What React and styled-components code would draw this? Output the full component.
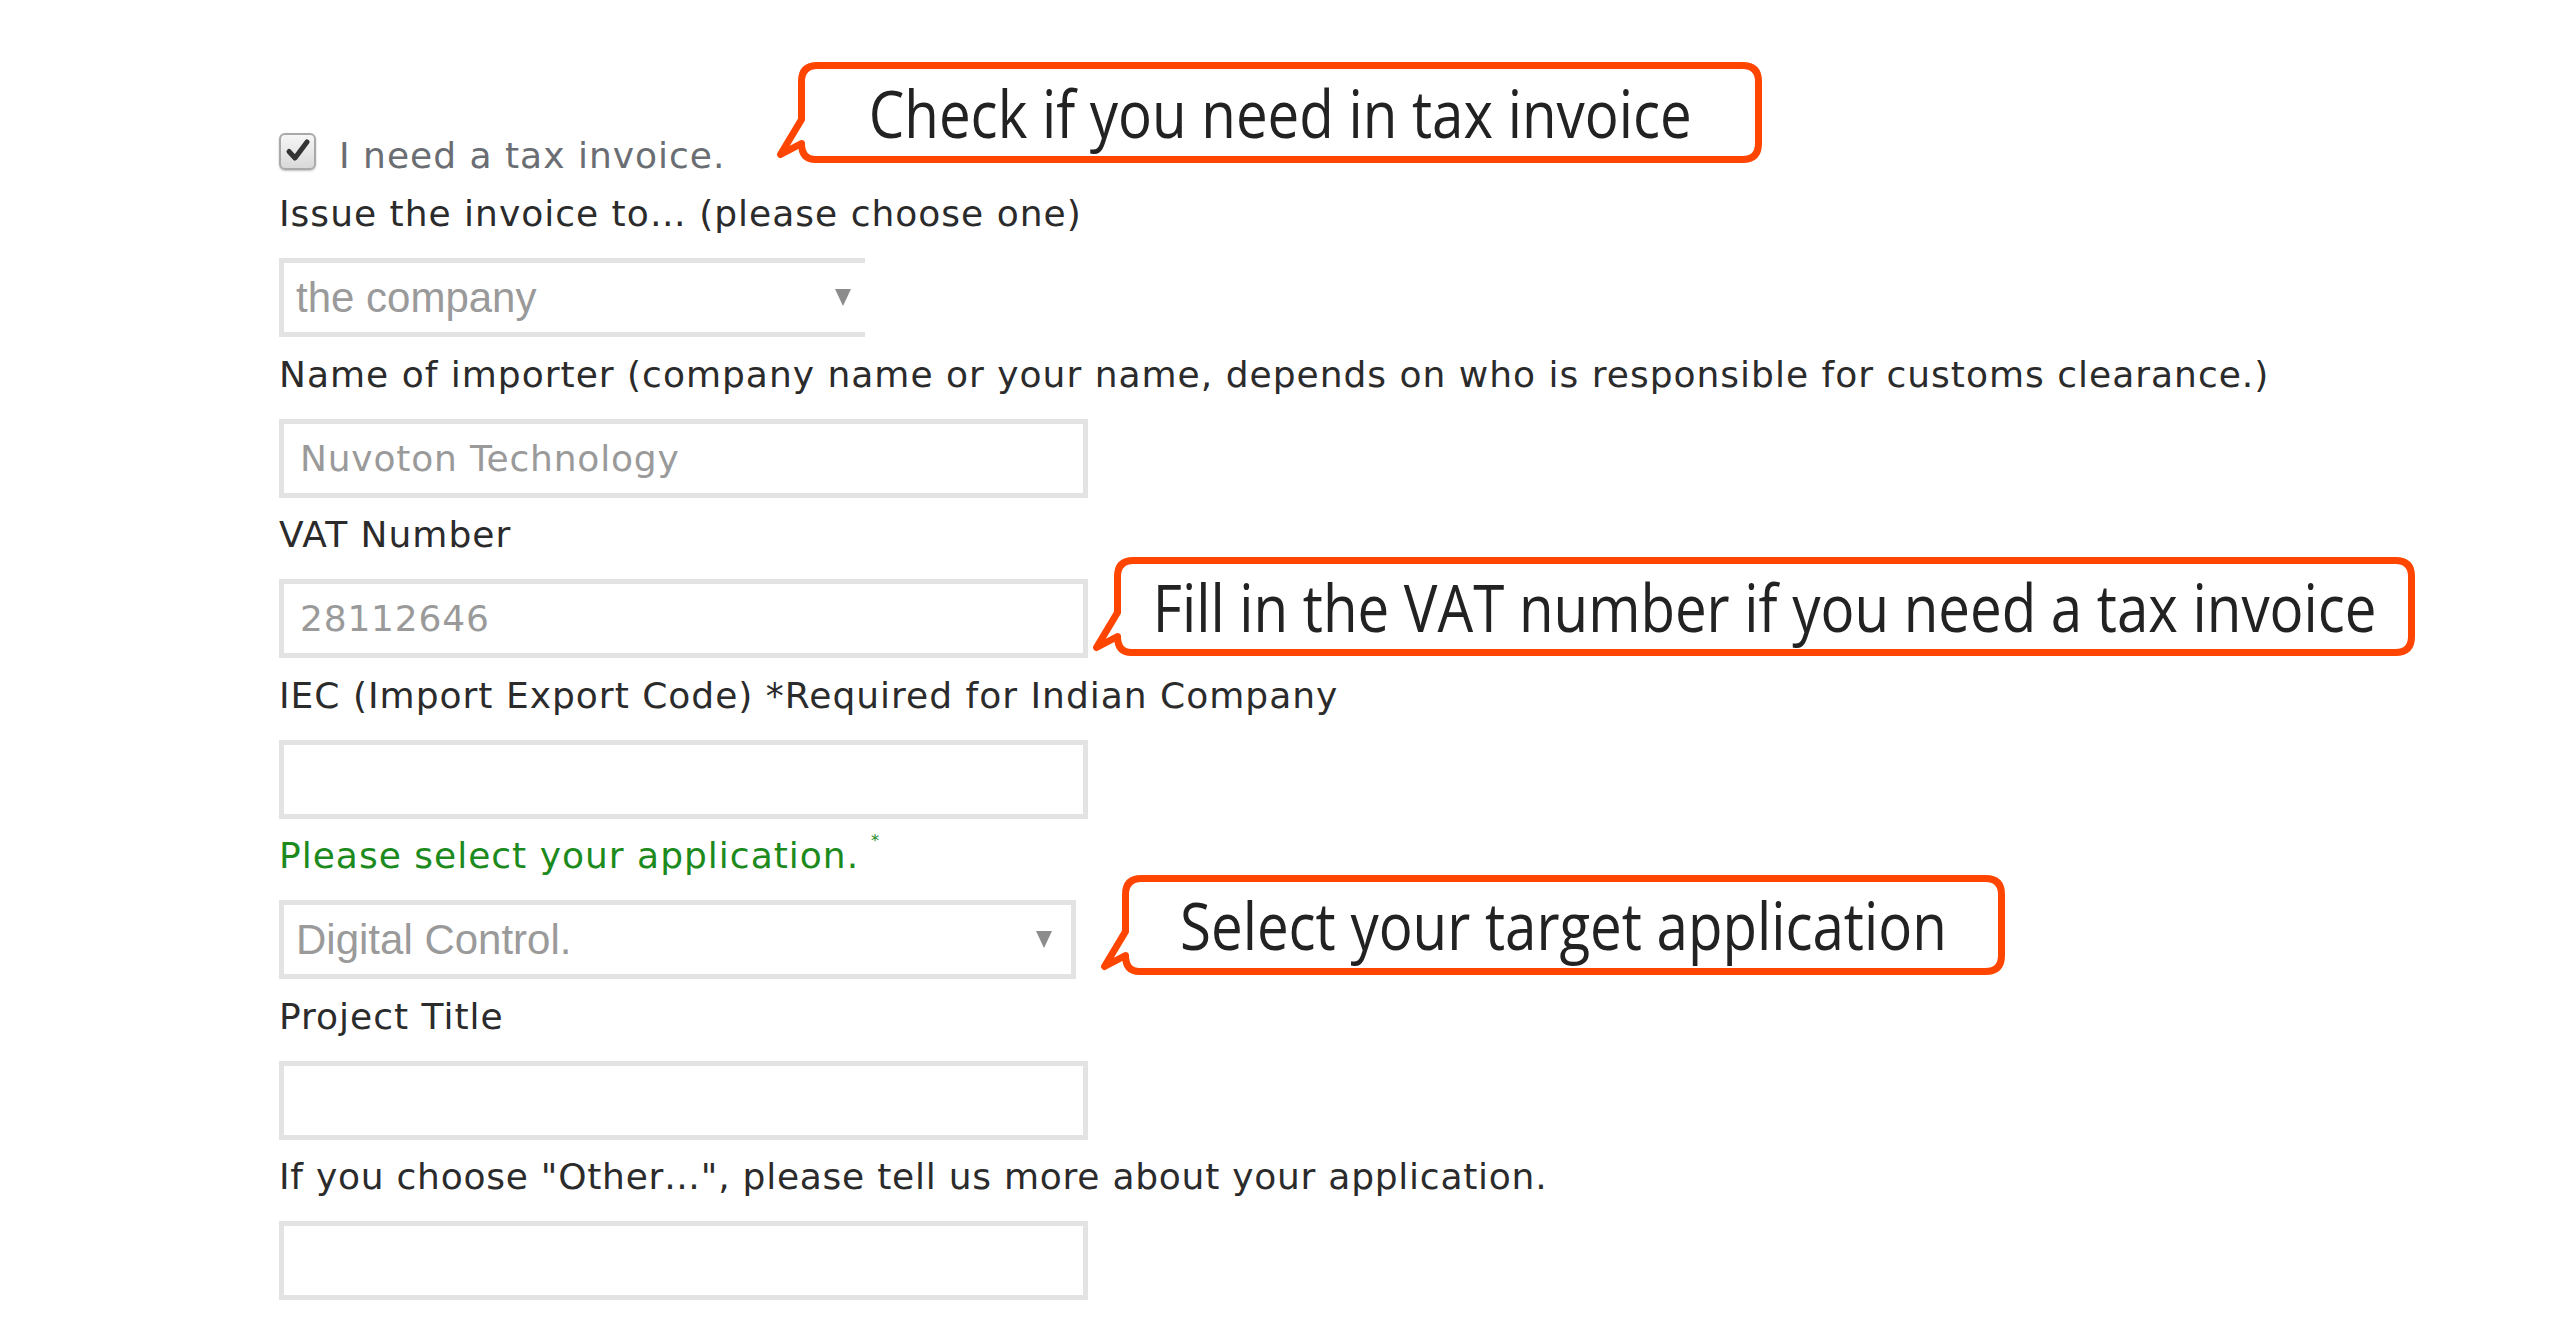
import React from "react";
import styled, { createGlobalStyle } from "styled-components";

const GlobalStyle = createGlobalStyle`
  html, body {
    margin: 0;
    padding: 0;
    background: #ffffff;
  }
  body {
    font-family: "DejaVu Sans", Verdana, sans-serif;
  }
`;

const Page = styled.div`
  position: relative;
  width: 2560px;
  height: 1332px;
  overflow: hidden;
  background: #ffffff;
`;

const Form = styled.div`
  display: flex;
  flex-direction: column;
  align-items: flex-start;
  padding: 132px 0 0 279px;
`;

const CheckRow = styled.div`
  display: flex;
  align-items: center;
  gap: 23px;
  height: 38px;
`;

const CheckBox = styled.span`
  display: inline-flex;
  align-items: center;
  justify-content: center;
  width: 37px;
  height: 37px;
  box-sizing: border-box;
  border: 2px solid #a9a9a9;
  border-radius: 6px;
  background: linear-gradient(#f6f6f6, #d9d9d9);
  box-shadow: 0 1px 2px rgba(0, 0, 0, 0.25);
`;

const CheckText = styled.span`
  font-size: 36px;
  letter-spacing: 1px;
  color: #6a6d72;
  line-height: 44px;
  position: relative;
  top: 5px;
`;

const Label = styled.label`
  display: block;
  font-size: 36px;
  letter-spacing: ${(p) => p.$spacing ?? 1}px;
  line-height: 44px;
  color: ${(p) => (p.$green ? "#1c8a1c" : "#2b2b2b")};
  margin: ${(p) => (p.$first ? "22px" : "15.5px")} 0 22px;
  white-space: nowrap;
`;

const Star = styled.sup`
  font-size: 16px;
  margin-left: 12px;
  vertical-align: 22px;
  line-height: 0;
`;

const Field = styled.div`
  display: flex;
  align-items: center;
  justify-content: space-between;
  box-sizing: border-box;
  width: ${(p) => p.$w}px;
  height: 79px;
  border: 5px solid #e3e3e3;
  border-right-width: ${(p) => (p.$open ? 0 : 5)}px;
  background: #ffffff;
  padding: 0 ${(p) => p.$pr || 16}px 0 16px;
`;

const InputValue = styled.span`
  font-size: 36px;
  letter-spacing: 0.8px;
  color: #9a9a9a;
`;

const SelectValue = styled.span`
  font-family: "Liberation Sans", Arial, sans-serif;
  font-size: 42px;
  color: #9a9a9a;
  margin-left: -4px;
`;

const Arrow = styled.span`
  width: 0;
  height: 0;
  border-left: 8px solid transparent;
  border-right: 8px solid transparent;
  border-top: 17px solid #8c8c8c;
`;

const CalloutBox = styled.div`
  position: absolute;
  left: ${(p) => p.$x - 24}px;
  top: ${(p) => p.$y}px;
  width: ${(p) => p.$w + 24}px;
  height: ${(p) => p.$h}px;
`;

const CalloutSvg = styled.svg`
  position: absolute;
  inset: 0;
  overflow: visible;
`;

const CalloutTextWrap = styled.div`
  position: absolute;
  left: 24px;
  right: 0;
  top: 0;
  bottom: 2px;
  display: flex;
  align-items: center;
  justify-content: center;
`;

const CalloutText = styled.span`
  display: inline-block;
  font-family: "Open Sans", "Noto Sans", sans-serif;
  font-size: 66px;
  color: #222222;
  white-space: nowrap;
  transform: scaleX(0.855);
  transform-origin: center;
`;

function Callout({ x, y, w, h, children }) {
  const s = 7;
  const hs = s / 2;
  const r = 16;
  const x0 = 24 + hs;
  const y0 = hs;
  const x1 = w + 24 - hs;
  const y1 = h - hs;
  const d = [
    `M ${x0 + r} ${y0}`,
    `H ${x1 - r}`,
    `Q ${x1} ${y0} ${x1} ${y0 + r}`,
    `V ${y1 - r}`,
    `Q ${x1} ${y1} ${x1 - r} ${y1}`,
    `H ${x0 + 14}`,
    `Q ${x0} ${y1} ${x0} ${y1 - 16}`,
    `L ${x0 - 21} ${y1 - 5}`,
    `L ${x0} ${y1 - 40}`,
    `V ${y0 + r}`,
    `Q ${x0} ${y0} ${x0 + r} ${y0}`,
    "Z",
  ].join(" ");
  return (
    <CalloutBox $x={x} $y={y} $w={w} $h={h}>
      <CalloutSvg width={w + 24} height={h} viewBox={`0 0 ${w + 24} ${h}`}>
        <path
          d={d}
          fill="#ffffff"
          stroke="#ff4500"
          strokeWidth={s}
          strokeLinejoin="round"
        />
      </CalloutSvg>
      <CalloutTextWrap>
        <CalloutText>{children}</CalloutText>
      </CalloutTextWrap>
    </CalloutBox>
  );
}

export default function App() {
  return (
    <Page>
      <GlobalStyle />
      <Form>
        <CheckRow>
          <CheckBox>
            <svg width="26" height="26" viewBox="0 0 26 26">
              <path
                d="M4 13.5 L10 20 L22 4"
                fill="none"
                stroke="#333"
                strokeWidth="5"
                strokeLinecap="round"
                strokeLinejoin="round"
              />
            </svg>
          </CheckBox>
          <CheckText>I need a tax invoice.</CheckText>
        </CheckRow>

        <Label $first>Issue the invoice to… (please choose one)</Label>
        <Field $w={586} $open $pr={14}>
          <SelectValue>the company</SelectValue>
          <Arrow />
        </Field>

        <Label>
          Name of importer (company name or your name, depends on who is
          responsible for customs clearance.)
        </Label>
        <Field $w={809}>
          <InputValue>Nuvoton Technology</InputValue>
        </Field>

        <Label>VAT Number</Label>
        <Field $w={809}>
          <InputValue>28112646</InputValue>
        </Field>

        <Label>IEC (Import Export Code) *Required for Indian Company</Label>
        <Field $w={809} />

        <Label $green>
          Please select your application.<Star>*</Star>
        </Label>
        <Field $w={797} $pr={19}>
          <SelectValue>Digital Control.</SelectValue>
          <Arrow />
        </Field>

        <Label>Project Title</Label>
        <Field $w={809} />

        <Label $spacing={0.75}>
          If you choose "Other…", please tell us more about your application.
        </Label>
        <Field $w={809} />
      </Form>

      <Callout x={798} y={62} w={964} h={101}>
        Check if you need in tax invoice
      </Callout>
      <Callout x={1114} y={557} w={1301} h={99}>
        Fill in the VAT number if you need a tax invoice
      </Callout>
      <Callout x={1122} y={875} w={883} h={100}>
        Select your target application
      </Callout>
    </Page>
  );
}
